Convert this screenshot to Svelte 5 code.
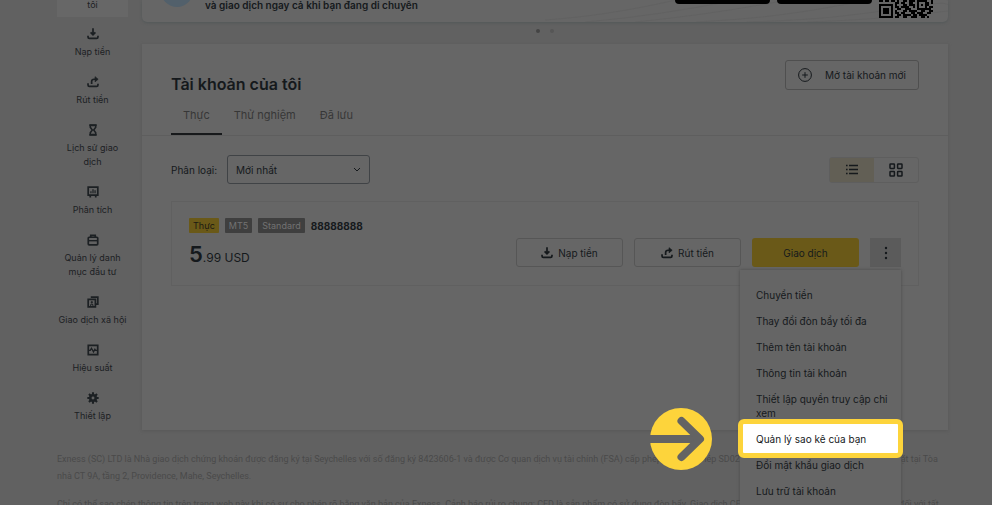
<script>
    let sort = $state('newest');
    let view = $state('list');

    const navItems = [
        { label: 'Nạp tiền', icon: 'deposit' },
        { label: 'Rút tiền', icon: 'withdraw' },
        { label: 'Lịch sử giao dịch', icon: 'history' },
        { label: 'Phân tích', icon: 'analytics' },
        { label: 'Quản lý danh mục đầu tư', icon: 'portfolio' },
        { label: 'Giao dịch xã hội', icon: 'social' },
        { label: 'Hiệu suất', icon: 'performance' },
        { label: 'Thiết lập', icon: 'settings' }
    ];

    const tabs = ['Thực', 'Thử nghiệm', 'Đã lưu'];

    const menuItems = [
        'Chuyển tiền',
        'Thay đổi đòn bẩy tối đa',
        'Thêm tên tài khoản',
        'Thông tin tài khoản',
        'Thiết lập quyền truy cập chỉ xem',
        'Quản lý sao kê của bạn',
        'Đổi mật khẩu giao dịch',
        'Lưu trữ tài khoản'
    ];
    const highlighted = 'Quản lý sao kê của bạn';

    // lower rows of the QR code, one character per module
    const qrRows = [
        '110110110100110111011111001',
        '000000001101100110010001101',
        '111111101000110111010101100',
        '100000101101111001010001011',
        '101110100110011100011111110',
        '101110101000110111100110011',
        '101110101101100011011100110',
        '100000100110111101101111000',
        '111111101100110011100110100'
    ];
    const qrCells = qrRows.flatMap((row, y) =>
        [...row].map((bit, x) => ({ x, y, bit })).filter((cell) => cell.bit === '1')
    );
</script>

{#snippet icon(name)}
    <svg class="icon" viewBox="0 0 14 14" fill="none" stroke="currentColor" stroke-width="2" aria-hidden="true">
        {#if name === 'deposit'}
            <path d="M7 .4v7.200M4.200 5L7 7.800 9.800 5" />
            <path d="M1.200 9v1.600c0 1 .6 1.600 1.600 1.600h8.400c1 0 1.600-.6 1.600-1.600V9" />
        {:else if name === 'withdraw'}
            <path d="M5.400 9.400V6.600c0-1.800 1-2.800 2.800-2.800h2.400" />
            <path d="M9.400 .8l3.600 3-3.600 3z" fill="currentColor" stroke-width=".8" />
            <path d="M1.200 8.600v2c0 1 .6 1.600 1.600 1.600h8.400c1 0 1.600-.6 1.600-1.600V9" />
        {:else if name === 'history'}
            <path d="M3.800 1.600h6.400v2.200L7.800 7l2.400 3.200v2.200H3.800v-2.200L6.200 7 3.800 3.800z" stroke-width="1.800" />
            <path d="M2.800 1.300h8.400M2.800 12.700h8.400" />
        {:else if name === 'analytics'}
            <path d="M1.400 1.400h11.200v9.200H1.400z" />
            <path d="M4.600 8.400V6M7 8.400V3.800M9.400 8.400V5" stroke-width="1.400" />
            <path d="M3.800 10.600v2.800M10.200 10.600v2.800" />
        {:else if name === 'portfolio'}
            <rect x="1.500" y="3.800" width="11" height="8.800" rx="1" />
            <path d="M4.400 3.600V1.500h5.200v2.100" />
            <path d="M1.600 7.800h10.800" stroke-width="1.600" />
        {:else if name === 'social'}
            <path d="M4.400 1.400h8.200v8.200h-2M1.400 4h8.400v8.600H1.400z" />
            <path d="M4.200 11.600c0-3 2.800-3 2.800 0" stroke-width="1.200" />
            <circle cx="5.600" cy="7.200" r=".9" fill="currentColor" stroke-width=".8" />
        {:else if name === 'performance'}
            <path d="M1.500 1.500h11v11h-11z" />
            <path d="M2 7.400h1.800l1.400-2.400 2.400 4.200 1.600-3 .8 1.200h2" stroke-width="1.500" />
        {:else if name === 'settings'}
            <circle cx="7" cy="7" r="3.200" stroke-width="3" />
            <path d="M7 .4v2.400M7 11.200v2.400M.4 7h2.400M11.200 7h2.400M2.300 2.300L4 4M10 10l1.700 1.700M2.300 11.700L4 10M10 4l1.700-1.700" stroke-width="2.400" />
        {/if}
    </svg>
{/snippet}

<div class="screen">
    <div class="shell">
        <nav class="sidebar">
            <a class="nav-item current" href="#accounts">tôi</a>
            {#each navItems as item}
                <a class="nav-item" href="#{item.icon}">
                    {@render icon(item.icon)}
                    <span>{item.label}</span>
                </a>
            {/each}
        </nav>

        <main>
            <section class="banner">
                <svg class="waves" viewBox="0 0 400 22" preserveAspectRatio="none" aria-hidden="true">
                    <path d="M0 20Q60 16 130 0M40 22Q110 16 190 0M90 22Q170 14 240 0M150 22Q230 18 300 4T400 0M200 22Q280 20 340 10T400 5M260 22Q330 20 400 11" />
                </svg>
                <svg class="bubble" viewBox="0 0 32 7" aria-hidden="true">
                    <circle cx="16" cy="-9" r="16" />
                </svg>
                <p>và giao dịch ngay cả khi bạn đang di chuyển</p>
                <span class="store"></span>
                <span class="store"></span>
                <svg class="qr" viewBox="0 0 27 9" shape-rendering="crispEdges" aria-hidden="true">
                    {#each qrCells as cell}
                        <rect x={cell.x} y={cell.y} width="1" height="1" />
                    {/each}
                </svg>
            </section>

            <div class="dots"><i class="on"></i><i></i></div>

            <section class="card">
                <header class="card-head">
                    <h1>Tài khoản của tôi</h1>
                    <button class="btn open-btn">
                        <svg viewBox="0 0 14 14" fill="none" stroke="currentColor" aria-hidden="true">
                            <circle cx="7" cy="7" r="6.400" />
                            <path d="M7 4.200v5.600M4.200 7h5.600" />
                        </svg>
                        Mở tài khoản mới
                    </button>
                </header>

                <div class="tabs">
                    {#each tabs as tab, i}
                        <button class="tab" class:active={i === 0}>{tab}</button>
                    {/each}
                </div>

                <div class="filters">
                    <label for="sort">Phân loại:</label>
                    <div class="select-wrap">
                        <select id="sort" bind:value={sort}>
                            <option value="newest">Mới nhất</option>
                        </select>
                        <svg viewBox="0 0 8 5" fill="none" stroke="currentColor" aria-hidden="true">
                            <path d="M1 1l3 3 3-3" />
                        </svg>
                    </div>
                    <div class="views">
                        <button class:active={view === 'list'} aria-label="Danh sách" onclick={() => (view = 'list')}>
                            <svg viewBox="0 0 14 14" fill="none" stroke="currentColor" stroke-width="1.600" aria-hidden="true">
                                <path d="M4 2.500h9M4 6.500h9M4 10.500h9M1 2.500h1.600M1 6.500h1.600M1 10.500h1.600" />
                            </svg>
                        </button>
                        <button class:active={view === 'grid'} aria-label="Lưới" onclick={() => (view = 'grid')}>
                            <svg viewBox="0 0 14 14" fill="none" stroke="currentColor" stroke-width="1.500" aria-hidden="true">
                                <rect x="1" y="1" width="4.400" height="4.400" rx=".6" />
                                <rect x="8.600" y="1" width="4.400" height="4.400" rx=".6" />
                                <rect x="1" y="8.600" width="4.400" height="4.400" rx=".6" />
                                <rect x="8.600" y="8.600" width="4.400" height="4.400" rx=".6" />
                            </svg>
                        </button>
                    </div>
                </div>

                <article class="account">
                    <div class="info">
                        <div class="tags">
                            <span class="tag real">Thực</span>
                            <span class="tag">MT5</span>
                            <span class="tag">Standard</span>
                            <strong>88888888</strong>
                        </div>
                        <div class="balance"><b>5</b>.99 USD</div>
                    </div>
                    <div class="actions">
                        <button class="btn">{@render icon('deposit')}Nạp tiền</button>
                        <button class="btn">{@render icon('withdraw')}Rút tiền</button>
                        <button class="btn trade">Giao dịch</button>
                        <div class="more">
                            <button class="more-btn" aria-label="Thêm">
                                <svg viewBox="0 0 4 14" fill="currentColor" aria-hidden="true">
                                    <circle cx="2" cy="2" r="1.200" />
                                    <circle cx="2" cy="7" r="1.200" />
                                    <circle cx="2" cy="12" r="1.200" />
                                </svg>
                            </button>
                            <ul class="menu">
                                {#each menuItems as item}
                                    <li class:highlight={item === highlighted}>
                                        <button>{item}</button>
                                        {#if item === highlighted}
                                            <svg class="pointer" viewBox="0 0 62 62" aria-hidden="true">
                                                <circle cx="31" cy="31" r="31" />
                                                <path d="M0 31h50" stroke-linecap="butt" />
                                                <path d="M31.500 13L50 31 31.500 49" stroke-linecap="round" />
                                            </svg>
                                        {/if}
                                    </li>
                                {/each}
                            </ul>
                        </div>
                    </div>
                </article>
            </section>
        </main>
    </div>

    <footer>
        <p>Exness (SC) LTD là Nhà giao dịch chứng khoán được đăng ký tại Seychelles với số đăng ký 8423606-1 và được Cơ quan dịch vụ tài chính (FSA) cấp phép với giấy phép SD025. Văn phòng đăng ký của Exness (SC) đặt tại Tòa nhà CT 9A, tầng 2, Providence, Mahe, Seychelles.</p>
        <p>Chỉ có thể sao chép thông tin trên trang web này khi có sự cho phép rõ bằng văn bản của Exness. Cảnh báo rủi ro chung: CFD là sản phẩm có sử dụng đòn bẩy. Giao dịch CFD tiềm ẩn rủi ro cao nên không phù hợp đối với tất cả các nhà đầu tư.</p>
    </footer>
</div>

<style>
    :global(body) {
        background: #fff;
    }

    .screen {
        margin-right: 8px;
        height: 100vh;
        overflow: hidden;
        background: #616161;
        color: #15191c;
        font-family: Inter, Roboto, 'Noto Sans', sans-serif;
        font-size: 10px;
        line-height: 14px;
    }

    .shell {
        display: grid;
        grid-template-columns: 71px 1fr;
        gap: 14px;
        padding: 0 44px 0 57px;
    }

    button,
    select {
        font: inherit;
        color: inherit;
        cursor: pointer;
    }

    button {
        display: flex;
        align-items: center;
        justify-content: center;
        padding: 0;
        border: 0;
        background: none;
    }

    .icon {
        width: 12px;
        height: 12px;
        flex: none;
    }

    .sidebar {
        display: flex;
        flex-direction: column;
    }

    .nav-item {
        display: flex;
        flex-direction: column;
        align-items: center;
        gap: 5px;
        padding: 11px 0 6px;
        font-size: 9px;
        text-align: center;
        text-decoration: none;
        color: #1c2023;
    }

    .nav-item.current {
        margin-top: -2px;
        padding: 0 0 5px;
        background: #676767;
    }

    main {
        min-width: 0;
    }

    .banner {
        position: relative;
        display: flex;
        align-items: flex-start;
        gap: 7px;
        height: 22px;
        padding: 0 15px 0 19px;
        border-radius: 0 0 5px 5px;
        background: #666;
        box-shadow: 0 1px 3px #535859;
    }

    .waves {
        position: absolute;
        right: 0;
        top: 0;
        width: 50%;
        height: 100%;
        fill: none;
        stroke: #626262;
    }

    .bubble {
        width: 32px;
        height: 7px;
        fill: #52606b;
    }

    .banner p {
        flex: 1;
        margin: 0 0 0 5px;
        line-height: 10px;
        font-weight: 600;
    }

    .store {
        position: relative;
        width: 95px;
        height: 4px;
        border-radius: 0 0 4px 4px;
        background: #000;
    }

    .qr {
        position: relative;
        width: 54px;
        height: 18px;
        fill: #000;
    }

    .dots {
        display: flex;
        align-items: center;
        justify-content: center;
        gap: 10px;
        height: 18px;
        margin-bottom: 4px;
    }

    .dots i {
        width: 4px;
        height: 4px;
        border-radius: 50%;
        background: #565656;
    }

    .dots .on {
        background: #444;
    }

    .card {
        min-height: 386px;
        box-sizing: border-box;
        padding-top: 16px;
        background: #666;
        box-shadow: 0 1px 3px #585858;
    }

    .card-head {
        display: flex;
        align-items: flex-end;
        justify-content: space-between;
        height: 34px;
        padding: 0 29px;
    }

    .card-head h1 {
        margin: 0;
        font-size: 16px;
        font-weight: 600;
        line-height: 20px;
    }

    .btn {
        box-sizing: border-box;
        width: 107px;
        height: 29px;
        gap: 5px;
        border: 1px solid #565656;
        border-radius: 3px;
    }

    .open-btn {
        align-self: flex-start;
        gap: 13px;
        width: 134px;
        height: 30px;
        border-color: #4f4f4f;
    }

    .open-btn svg {
        width: 14px;
        height: 14px;
    }

    .tabs {
        display: flex;
        height: 41px;
        padding: 0 29px;
        border-bottom: 1px solid #5e5e5e;
    }

    .tab {
        padding: 3px 12px 0;
        border-bottom: 2px solid transparent;
        font-size: 11px;
        color: #373737;
    }

    .tab.active {
        border-color: #17191b;
    }

    .filters {
        display: flex;
        align-items: center;
        padding: 19px 29px 17px;
    }

    .select-wrap {
        position: relative;
        width: 143px;
        margin-left: 10px;
    }

    .select-wrap select {
        appearance: none;
        width: 100%;
        height: 29px;
        padding: 0 8px;
        border: 1px solid #404346;
        border-radius: 3px;
        background: transparent;
    }

    .select-wrap svg {
        position: absolute;
        right: 9px;
        top: 12px;
        width: 8px;
        height: 5px;
    }

    .views {
        display: flex;
        margin-left: auto;
        border: 1px solid #5e5e5e;
        border-radius: 3px;
    }

    .views button {
        width: 44px;
        height: 24px;
    }

    .views button.active {
        background: #625f55;
    }

    .views svg {
        width: 14px;
        height: 14px;
    }

    .account {
        display: flex;
        justify-content: space-between;
        margin: 0 29px;
        padding: 16px 17px 18px;
        border: 1px solid #606060;
    }

    .tags {
        display: flex;
        align-items: center;
        gap: 6px;
    }

    .tag {
        padding: 0 4px;
        border-radius: 1px;
        font-size: 9px;
        line-height: 15px;
        background: #3f3f3f;
        color: #727272;
    }

    .tag.real {
        background: #6a5918;
        color: #1b1a12;
    }

    .balance {
        margin-top: 8px;
        font-size: 12px;
        line-height: 26px;
    }

    .balance b {
        font-size: 22px;
        font-weight: 600;
    }

    .info {
        height: 49px;
    }

    .actions {
        display: flex;
        align-items: flex-end;
        gap: 11px;
    }

    .trade {
        border: 0;
        background: #6a5918;
    }

    .more {
        position: relative;
    }

    .more-btn {
        width: 31px;
        height: 29px;
        background: #5b5b5b;
    }

    .more-btn svg {
        width: 4px;
        height: 14px;
    }

    .menu {
        position: absolute;
        z-index: 1;
        top: calc(100% + 3px);
        right: 0;
        width: 161px;
        margin: 0;
        padding: 12px 0;
        list-style: none;
        background: #656565;
        box-shadow: 0 0 3px #4a4a4a;
    }

    .menu li {
        position: relative;
    }

    .menu li button {
        position: relative;
        width: 100%;
        justify-content: flex-start;
        padding: 6px 8px 6px 16px;
        text-align: left;
    }

    .highlight::before {
        content: '';
        position: absolute;
        inset: -7px -2px -6px;
        border: 5px solid #fdd43b;
        border-radius: 6px;
        background: #fff;
    }

    .pointer {
        position: absolute;
        right: calc(100% + 28px);
        top: -18px;
        width: 62px;
        height: 62px;
    }

    .pointer circle {
        fill: #fdd43b;
    }

    .pointer path {
        fill: none;
        stroke: #636363;
        stroke-width: 8;
        stroke-linejoin: round;
    }

    footer {
        padding: 21px 44px 0 57px;
        font-family: Roboto, Inter, 'Noto Sans', sans-serif;
        font-size: 9px;
        line-height: 17px;
        color: #4a4a4a;
    }

    footer p {
        margin: 0 0 11px;
    }
</style>
